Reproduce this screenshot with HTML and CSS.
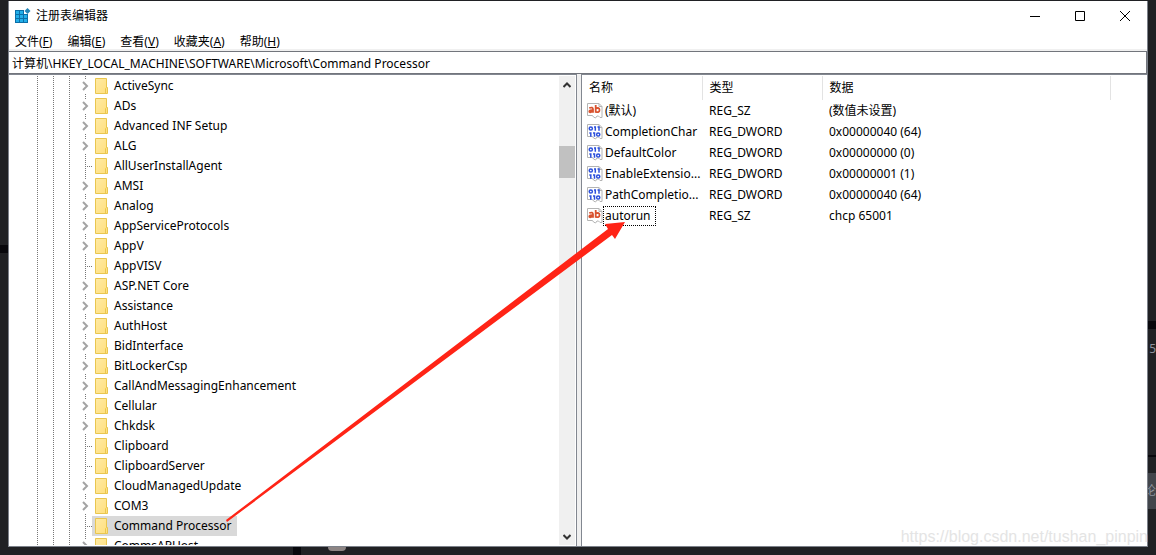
FILE: index.html
```html
<!DOCTYPE html>
<html lang="zh-CN">
<head>
<meta charset="utf-8">
<title>注册表编辑器</title>
<link rel="stylesheet" href="styles.css">
</head>
<body>
<svg class="defs" aria-hidden="true">
  <linearGradient id="paper" x2="1" y2="1"><stop offset="0" stop-color="#ffeaa4"/><stop offset="1" stop-color="#ffdf7c"/></linearGradient>
  <symbol id="chevron" viewBox="0 0 8 10"><path d="M2 1l4 4-4 4" fill="none" stroke="#a3a3a3" stroke-width="2"/></symbol>
  <symbol id="folder" viewBox="0 0 13 16"><path d="M.5.5h11v9h1v6H.5z" fill="url(#paper)" stroke="#e9c64f"/><path d="M10.500 15.500V10.500l1-1" fill="none" stroke="#e9c64f"/></symbol>
  <symbol id="page" viewBox="0 0 16 16"><path d="M.5.5h11.500l3 3v11h-2l-1.500-1.500-1.500 0-1.500 2-2-1-1-1.500H.5z" fill="#fff" stroke="#b4b4b4"/><path d="M12 .5v3h3" fill="none" stroke="#b4b4b4"/></symbol>
  <symbol id="string" viewBox="0 0 16 16"><use href="#page"/><g fill="none" stroke="#d9532f" stroke-width="1.800"><path d="M2.200 5q3.800-1.300 3.800 1.300v3.500M6 7.200q-3.700-.3-3.700 1.300T6 8.300M8.700 2v7.800M8.700 5.500q3.800-1.500 3.800 1.500T8.700 8.900"/></g></symbol>
  <symbol id="binary" viewBox="0 0 16 16"><use href="#page"/><g fill="none" stroke="#2c50dc" stroke-width="1.500"><circle cx="3.800" cy="4.500" r="1.600"/><circle cx="11.200" cy="10.500" r="1.600"/><path d="M8.300 2.200v4.600M7 3h1.300M12 2.200v4.600M10.500 3H12M3.800 8.200v4.600M2.300 9h1.500M7.500 8.200v4.600M6 9h1.500"/></g></symbol>
</svg>
<aside class="rail rail-left" aria-hidden="true"><i class="groove"></i></aside>
<aside class="rail rail-right"><i class="groove"></i><span class="count">5</span><i class="rule"></i><span class="tab">论</span></aside>
<aside class="rail-bottom" aria-hidden="true"><i class="divider"></i><i class="avatar"></i></aside>
<main class="window">
  <header class="titlebar">
    <svg class="app-icon" viewBox="0 0 16 16"><path d="M0 2h9v4h4v9H0z" fill="#0b6fa8"/><path d="M1 3h3v3H1zM5 3h3v3H5zM1 7h3v3H1zM5 7h3v3H5zM9 7h3v3H9zM1 11h3v3H1zM5 11h3v3H5zM9 11h3v3H9z" fill="#22aee8"/><path d="M12.500 0l3 3-3 3-3-3z" fill="#2386b8"/></svg>
    <h1 class="title">注册表编辑器</h1>
    <div class="controls">
      <button class="control" aria-label="最小化"><svg viewBox="0 0 10 10"><path d="M0 5.500h10"/></svg></button>
      <button class="control" aria-label="最大化"><svg viewBox="0 0 10 10"><path d="M.5.5h9v9h-9z"/></svg></button>
      <button class="control" aria-label="关闭"><svg viewBox="0 0 10 10"><path d="M0 0l10 10M10 0L0 10"/></svg></button>
    </div>
  </header>
  <nav class="menubar">
    <button>文件(<u>F</u>)</button><button>编辑(<u>E</u>)</button><button>查看(<u>V</u>)</button><button>收藏夹(<u>A</u>)</button><button>帮助(<u>H</u>)</button>
  </nav>
  <input class="address" aria-label="地址" value="计算机\HKEY_LOCAL_MACHINE\SOFTWARE\Microsoft\Command Processor">
  <div class="panes">
    <section class="tree-pane">
      <ul class="tree" id="tree"></ul>
      <div class="scrollbar">
        <button class="scroll-button" aria-label="向上滚动"><svg viewBox="0 0 8 6"><path d="M0.500 5L4 1.500 7.500 5"/></svg></button>
        <div class="track"><div class="thumb"></div></div>
        <button class="scroll-button" aria-label="向下滚动"><svg viewBox="0 0 8 6"><path d="M0.500 1L4 4.500 7.500 1"/></svg></button>
      </div>
    </section>
    <section class="value-pane">
      <table class="values">
        <colgroup><col class="narrow"><col class="narrow"><col class="wide"><col></colgroup>
        <thead><tr><th>名称</th><th>类型</th><th>数据</th><td></td></tr></thead>
        <tbody>
          <tr><td><div class="name"><svg><use href="#string"/></svg><span>(默认)</span></div></td><td>REG_SZ</td><td>(数值未设置)</td></tr>
          <tr><td><div class="name"><svg><use href="#binary"/></svg><span>CompletionChar</span></div></td><td>REG_DWORD</td><td>0x00000040 (64)</td></tr>
          <tr><td><div class="name"><svg><use href="#binary"/></svg><span>DefaultColor</span></div></td><td>REG_DWORD</td><td>0x00000000 (0)</td></tr>
          <tr><td><div class="name"><svg><use href="#binary"/></svg><span>EnableExtensio...</span></div></td><td>REG_DWORD</td><td>0x00000001 (1)</td></tr>
          <tr><td><div class="name"><svg><use href="#binary"/></svg><span>PathCompletio...</span></div></td><td>REG_DWORD</td><td>0x00000040 (64)</td></tr>
          <tr><td><div class="name"><svg><use href="#string"/></svg><span class="focused">autorun</span></div></td><td>REG_SZ</td><td>chcp 65001</td></tr>
        </tbody>
      </table>
    </section>
  </div>
</main>
<svg class="arrow" aria-hidden="true"><path d="M226 520L608 229l-3-5 20-2-10 17-3-4L227 522z" fill="#ff2416"/></svg>
<div class="watermark">https://blog.csdn.net/tushan_pinpin</div>
<script src="tree.js"></script>
</body>
</html>
```
FILE: styles.css
```css
* { box-sizing: border-box; }
body { margin: 0; height: 100vh; padding: 1px 8px 8px; overflow: hidden; position: relative; background: #202124; font: 12px/20px "Noto Sans", "Noto Sans CJK SC", sans-serif; color: #000; }
button, input { font: inherit; color: inherit; border: 0; padding: 0; background: none; }
.defs { position: absolute; width: 0; height: 0; }

/* Desktop visible around the window */
.rail { position: absolute; top: 0; bottom: 0; width: 8px; display: flex; flex-direction: column; }
.rail i, .rail-bottom i { display: block; flex: none; }
.rail-left { left: 0; padding-top: 245px; }
.rail-right { right: 0; padding-top: 321px; color: #8e929c; align-items: flex-end; }
.groove { width: 100%; height: 8px; background: #08080c; }
.count { margin-top: 10px; }
.rule { width: 100%; height: 2px; margin-top: 96px; background: #08080c; }
.tab { display: flex; justify-content: flex-end; align-items: center; width: 100%; height: 36px; margin-top: 16px; background: #42454b; }
.rail-bottom { position: absolute; left: 293px; bottom: 0; height: 8px; display: flex; gap: 27px; }
.divider { width: 8px; height: 8px; background: #08080c; }
.avatar { width: 18px; height: 4px; border-radius: 0 0 9px 9px; background: #8d8584; }

.window { position: relative; height: 100%; display: flex; flex-direction: column; background: #fff; border: solid #7c818a; border-width: 0 1px 1px; }
.titlebar { display: flex; align-items: center; height: 29px; padding-left: 6px; flex: none; }
.app-icon { width: 16px; height: 16px; margin-right: 5px; }
.title { margin: 0; font: inherit; }
.controls { display: flex; margin-left: auto; align-self: stretch; }
.control { width: 45px; }
.control svg { width: 10px; height: 10px; fill: none; stroke: #000; display: block; margin: auto; }
.menubar { display: flex; gap: 15px; height: 21px; padding: 2px 0 0 6px; border-bottom: 2px solid #f0f0f0; flex: none; }
.address { height: 23px; padding: 0 3px; border: solid #72757c; border-width: 1px 1px 1px 0; flex: none; width: 100%; }
.panes { flex: 1; min-height: 0; display: flex; gap: 4px; background: #f0f0f0; }
.tree-pane { flex: 0 1 568px; min-width: 0; display: flex; background: #fff; border: solid #828790; border-width: 1px 1px 0 0; padding: 1px 1px 1px 0; }
.tree { flex: 1; min-width: 0; margin: 0; padding: 0 0 0 28px; list-style: none; overflow: hidden; }
.tree li { display: flex; height: 20px; align-items: center; }
.guide { width: 16px; height: 20px; flex: none; background: repeating-linear-gradient(#777 0 1px, transparent 1px 2px) 0 0 / 1px 100% no-repeat; }
.node { width: 7px; height: 20px; flex: none; background: repeating-linear-gradient(#777 0 1px, transparent 1px 2px) 0 0 / 1px 100% no-repeat, repeating-linear-gradient(90deg, #777 0 1px, transparent 1px 2px) 0 10px / 100% 1px no-repeat; }
.branch { width: 7px; height: 20px; flex: none; display: flex; align-items: center; background: repeating-linear-gradient(#777 0 1px, transparent 1px 2px) 0 0 / 1px 100% no-repeat; }
.toggle { display: block; width: 10px; height: 14px; margin: 0 0 0 -4px; background: #fff; flex: none; }
.toggle svg { width: 8px; height: 10px; display: block; }
.item { display: flex; align-items: center; height: 20px; padding: 0 6px 0 3px; white-space: nowrap; }
.item svg { width: 13px; height: 16px; margin-right: 6px; flex: none; }
.selected { background: #d9d9d9; }
.scrollbar { width: 16px; display: flex; flex-direction: column; background: #f0f0f0; flex: none; }
.scroll-button { height: 17px; flex: none; }
.scroll-button svg { width: 8px; height: 6px; display: block; margin: auto; fill: none; stroke: #333; stroke-width: 2; }
.track { flex: 1; padding-top: 53px; }
.thumb { height: 32px; background: #c1c1c1; }
.value-pane { flex: 1; min-width: 0; background: #fff; border: solid #828790; border-width: 1px 0 0 1px; padding-top: 1px; }
.values { width: 100%; table-layout: fixed; border-collapse: collapse; }
.narrow { width: 120px; }
.wide { width: 288px; }
.values th { height: 24px; padding: 0 7px; text-align: left; font-weight: normal; border-right: 1px solid #e3e3e3; }
.values td { height: 21px; padding: 0 7px; white-space: nowrap; }
.name { display: flex; align-items: center; margin: 0 -2px; }
.name svg { width: 16px; height: 16px; flex: none; }
.name span { padding: 0 2px; }
.name .focused { outline: 1px dotted #000; outline-offset: -1px; padding-right: 5px; }

/* Annotations over the window */
.arrow { position: absolute; left: 0; top: 0; width: 100%; height: 100%; pointer-events: none; }
.watermark { position: absolute; right: 8px; bottom: 8px; font: 16px/20px "Liberation Sans", sans-serif; color: #e4e4e4; }
```
FILE: tree.js
```js
const keys = [
  ["ActiveSync", 1], ["ADs", 1], ["Advanced INF Setup", 1], ["ALG", 1], ["AllUserInstallAgent", 0],
  ["AMSI", 1], ["Analog", 1], ["AppServiceProtocols", 1], ["AppV", 1], ["AppVISV", 0],
  ["ASP.NET Core", 1], ["Assistance", 1], ["AuthHost", 1], ["BidInterface", 1], ["BitLockerCsp", 1],
  ["CallAndMessagingEnhancement", 1], ["Cellular", 1], ["Chkdsk", 1], ["Clipboard", 0],
  ["ClipboardServer", 0], ["CloudManagedUpdate", 1], ["COM3", 1], ["Command Processor", 0], ["CommsAPHost", 1]
];
const guide = '<span class="guide"></span>';
document.getElementById("tree").innerHTML = keys.map(([name, hasChildren]) => {
  const node = hasChildren
    ? `<span class="branch"><button class="toggle" aria-label="展开 ${name}"><svg><use href="#chevron"/></svg></button></span>`
    : '<span class="node"></span>';
  const selected = name === "Command Processor" ? " selected" : "";
  return `<li>${guide.repeat(3)}${node}<span class="item${selected}"><svg><use href="#folder"/></svg>${name}</span></li>`;
}).join("");
```
